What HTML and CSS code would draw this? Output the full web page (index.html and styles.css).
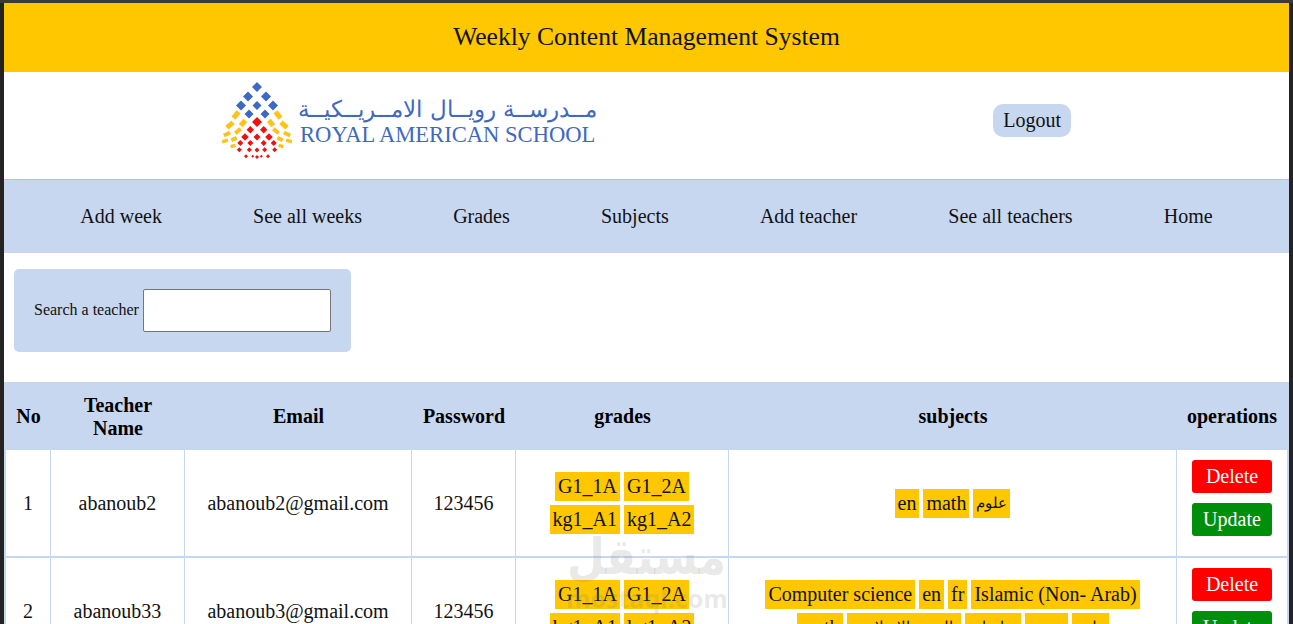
FILE: index.html
```html
<!DOCTYPE html>
<html lang="en">
<head>
<meta charset="utf-8">
<title>Weekly Content Management System</title>
<link rel="stylesheet" href="styles.css">
</head>
<body>
<div class="page">
  <header class="title">Weekly Content Management System</header>
  <div class="brand">
    <div class="logo">
      <svg class="logo-mark" width="70" height="80" viewBox="0 0 70 80">
        <defs>
          <g id="half">
            <g fill="#3d68c4">
              <path d="M26 10.500l5 5-5 5-5-5z"/>
              <path d="M19 19.500l5 5-5 5-5-5z"/>
              <path d="M27 28.500l4.500 4.500-4.500 4.500-4.500-4.500z"/>
            </g>
            <g fill="#ffc21a">
              <rect x="-4" y="-2.500" width="8" height="5" transform="translate(14 34) rotate(-50)"/>
              <rect x="-3.500" y="-2.500" width="7" height="5" transform="translate(21 42) rotate(-50)"/>
              <rect x="-4" y="-2.500" width="8" height="5" transform="translate(8 44) rotate(-40)"/>
              <rect x="-3.500" y="-2" width="7" height="4" transform="translate(16 50) rotate(-40)"/>
              <rect x="-3.500" y="-2" width="7" height="4" transform="translate(5 53) rotate(-25)"/>
              <rect x="-3" y="-2" width="6" height="4" transform="translate(12 58) rotate(-25)"/>
              <rect x="-3" y="-1.700" width="6" height="3.400" transform="translate(3 60) rotate(-15)"/>
              <rect x="-2.500" y="-1.700" width="5" height="3.400" transform="translate(11 65) rotate(-15)"/>
            </g>
            <g fill="#ee1111">
              <path d="M28.300 45l3.700 3.700-3.700 3.700-3.700-3.700z"/>
              <path d="M23 52.200l3.800 3.800-3.800 3.800-3.800-3.800z"/>
              <path d="M18.300 59l3 3-3 3-3-3z"/>
              <path d="M28.300 59l3 3-3 3-3-3z"/>
              <path d="M17.300 66.200l2.500 2.500-2.500 2.500-2.500-2.500z"/>
              <path d="M27.300 66.200l2.500 2.500-2.500 2.500-2.500-2.500z"/>
              <path d="M24 73.300l2 2-2 2-2-2z"/>
              <path d="M30.700 73.800l1.500 1.500-1.500 1.500-1.500-1.500z"/>
            </g>
          </g>
        </defs>
        <use href="#half"/>
        <use href="#half" transform="translate(70 0) scale(-1 1)"/>
        <path fill="#3d68c4" d="M35 1l5 5-5 5-5-5z"/>
        <path fill="#3d68c4" d="M35 20l4.500 4.500-4.500 4.500-4.500-4.500z"/>
        <path fill="#ee1111" d="M35 36l5 5-5 5-5-5z"/>
        <path fill="#ee1111" d="M35 52.500l3.500 3.500-3.500 3.500-3.500-3.500z"/>
        <path fill="#ee1111" d="M35 66.500l2.500 2.500-2.500 2.500-2.500-2.500z"/>
        <path fill="#ee1111" d="M35 74l2 2-2 2-2-2z"/>
      </svg>
      <div class="logo-text">
        <div class="logo-ar" lang="ar" dir="rtl">مــدرســة رويــال الامــريــكيــة</div>
        <div class="logo-en">ROYAL AMERICAN SCHOOL</div>
      </div>
    </div>
    <a class="logout">Logout</a>
  </div>
  <nav class="nav">
    <a>Add week</a>
    <a>See all weeks</a>
    <a>Grades</a>
    <a>Subjects</a>
    <a>Add teacher</a>
    <a>See all teachers</a>
    <a>Home</a>
  </nav>
  <form class="search">
    <label class="search-label">Search a teacher</label>
    <input class="search-input" type="text">
  </form>
  <table class="teachers">
    <colgroup>
      <col class="c1"><col class="c2"><col class="c3"><col class="c4"><col class="c5"><col class="c6"><col class="c7">
    </colgroup>
    <thead>
      <tr><th>No</th><th>Teacher Name</th><th>Email</th><th>Password</th><th>grades</th><th>subjects</th><th>operations</th></tr>
    </thead>
    <tbody>
      <tr>
        <td>1</td><td>abanoub2</td><td>abanoub2@gmail.com</td><td>123456</td>
        <td class="tags"><span>G1_1A</span><span>G1_2A</span><span>kg1_A1</span><span>kg1_A2</span></td>
        <td class="tags"><span>en</span><span>math</span><span class="ar">علوم</span></td>
        <td class="ops"><button class="btn del" type="button">Delete</button><button class="btn upd" type="button">Update</button></td>
      </tr>
      <tr>
        <td>2</td><td>abanoub33</td><td>abanoub3@gmail.com</td><td>123456</td>
        <td class="tags"><span>G1_1A</span><span>G1_2A</span><span>kg1_A1</span><span>kg1_A2</span></td>
        <td class="tags"><span>Computer science</span><span>en</span><span>fr</span><span>Islamic (Non- Arab)</span><span>math</span><span class="ar w-long">التربية الاسلامية</span><span class="ar w-mid">دراسات</span><span class="ar w-short">عربي</span><span class="ar">علوم</span></td>
        <td class="ops"><button class="btn del" type="button">Delete</button><button class="btn upd" type="button">Update</button></td>
      </tr>
    </tbody>
  </table>
</div>
<div class="watermark" aria-hidden="true">
  <div class="wm-ar" lang="ar" dir="rtl">مستقل</div>
  <div class="wm-en">mostaql.com</div>
</div>
</body>
</html>
```
FILE: styles.css
```css
html, body {
  margin: 0;
  height: 624px;
  overflow: hidden;
}
body {
  background: #232323;
  border-top: 3px solid #3a3a3a;
  padding: 0 4px;
  box-sizing: border-box;
  font-family: "Liberation Serif", "Times New Roman", serif;
  color: #000;
}
.page {
  background: #fff;
  min-height: 700px;
}
.title {
  background: #ffc700;
  height: 67px;
  padding-bottom: 2px;
  display: flex;
  align-items: center;
  justify-content: center;
  font-size: 25.6px;
  color: #111;
}
.brand {
  height: 96px;
  padding: 0 218px 11px 218px;
  display: flex;
  align-items: center;
  justify-content: space-between;
  border-bottom: 1px solid #ffc700;
}
.logo {
  display: flex;
  align-items: center;
  gap: 8px;
}
.logo-mark {
  display: block;
  margin-top: 2px;
}
.logo-text {
  width: 297px;
  color: #3f68c2;
}
.logo-ar {
  font-family: "DejaVu Sans", sans-serif;
  font-size: 23px;
  font-weight: 200;
  line-height: 30px;
  height: 29px;
  text-align: center;
  white-space: nowrap;
}
.logo-en {
  font-size: 22.6px;
  line-height: 24px;
  white-space: nowrap;
}
.logout {
  background: #c8d7f0;
  border-radius: 10px;
  padding: 5px 10px;
  font-size: 20px;
  line-height: 23px;
  color: #111;
}
.nav {
  background: #c8d7f0;
  height: 73px;
  display: flex;
  align-items: center;
  justify-content: center;
  gap: 91.2px;
  font-size: 20px;
  color: #111;
}
.search {
  background: #c8d7f0;
  width: 297px;
  margin: 16px 0 30px 10px;
  padding: 20px;
  border-radius: 5px;
  display: flex;
  align-items: center;
  gap: 4px;
}
.search-label {
  font-size: 16px;
  color: #111;
  white-space: nowrap;
  margin-bottom: 2px;
}
.search-input {
  width: 188px;
  height: 43px;
  box-sizing: border-box;
  margin: 0;
  background: #fff;
  border: 1px solid #767676;
  border-radius: 2px;
}
.teachers {
  width: 1285px;
  border-collapse: separate;
  border-spacing: 0;
  table-layout: fixed;
  font-size: 20px;
  text-align: center;
}
.c1 { width: 47px; }
.c2 { width: 134px; }
.c3 { width: 227px; }
.c4 { width: 104px; }
.c5 { width: 213px; }
.c6 { width: 448px; }
.c7 { width: 112px; }
.teachers th {
  background: #c8d7f0;
  height: 67px;
  padding: 1px 10px 0;
  font-size: 20px;
  line-height: 23px;
}
.teachers th:first-child {
  padding-left: 12px;
}
.teachers th:last-child {
  padding-right: 12px;
}
.teachers td {
  padding: 0 10px;
  height: 106px;
  border-right: 1px solid #c8d7f0;
  border-bottom: 2px solid #c8d7f0;
  color: #111;
}
.teachers td:first-child {
  border-left: 2px solid #c8d7f0;
}
.teachers td:last-child {
  border-right-width: 2px;
}
.teachers .ops {
  padding: 10px 0 0;
  height: 96px;
  vertical-align: top;
}
.tags span {
  display: inline-block;
  background: #ffc700;
  padding: 3px;
  margin: 2px;
  line-height: 23px;
  color: #111;
  vertical-align: top;
}
.tags .ar {
  font-size: 15px;
}
.tags .w-long {
  min-width: 108px;
}
.tags .w-mid {
  min-width: 50px;
}
.tags .w-short {
  min-width: 37px;
}
.ops {
  font-size: 0;
}
.btn {
  display: block;
  width: 80px;
  height: 33px;
  margin: 0 auto;
  padding: 0;
  border: 0;
  border-radius: 3px;
  color: #fff;
  font-family: inherit;
  font-size: 20px;
}
.btn + .btn {
  margin-top: 10px;
}
.del { background: #ff0000; }
.upd { background: #008f0b; }
.watermark {
  position: absolute;
  left: 566px;
  top: 528px;
  width: 160px;
  text-align: center;
  color: rgba(120, 120, 120, 0.18);
  pointer-events: none;
}
.wm-ar {
  font-family: "DejaVu Sans", sans-serif;
  font-size: 50px;
  font-weight: 700;
  line-height: 58px;
  white-space: nowrap;
  transform: scaleX(0.87);
  transform-origin: right center;
}
.wm-en {
  font-family: "Open Sans", sans-serif;
  font-size: 25px;
  font-weight: 700;
  line-height: 24px;
  white-space: nowrap;
}
```
